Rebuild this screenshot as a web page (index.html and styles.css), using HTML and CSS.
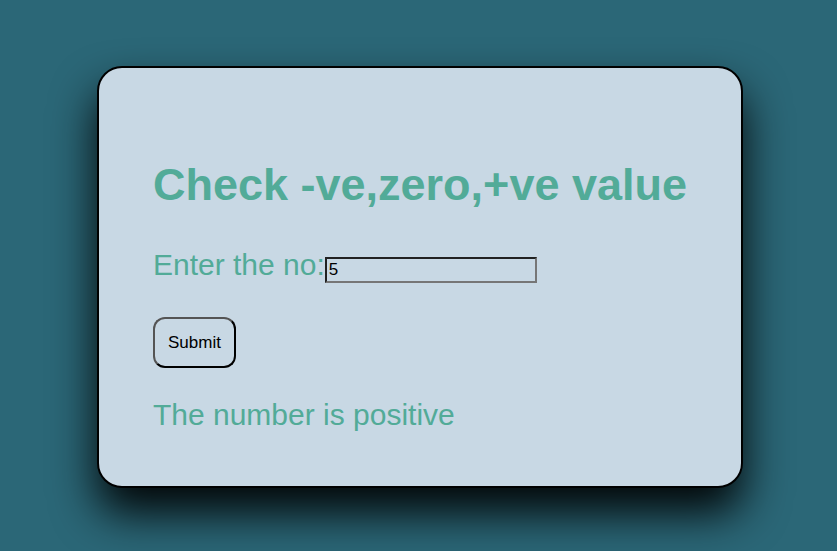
FILE: index.html
```html
<!DOCTYPE html>
<html lang="en">
<head>
<meta charset="utf-8">
<title>Check value</title>
<link rel="stylesheet" href="styles.css">
</head>
<body>
<main class="card">
<h1 class="title">Check -ve,zero,+ve value</h1>
<form class="form">
<div class="field"><label for="number">Enter the no:</label><input class="number" id="number" type="text" value="5"></div>
<button class="submit" type="button">Submit</button>
</form>
<p class="result">The number is positive</p>
</main>
</body>
</html>
```
FILE: styles.css
```css
body {
  box-sizing: border-box;
  min-height: 100vh;
  margin: 0;
  padding: 66px 20px 60px 23px;
  display: flex;
  justify-content: center;
  align-items: flex-start;
  background: #2b6777;
  color: #52ab98;
  font-family: "Liberation Sans", Arial, sans-serif;
  font-size: 30px;
  line-height: 34px;
}

.card {
  padding: 91px 54px 54px;
  border: 2px solid #000;
  border-radius: 25px;
  background: #c8d8e4;
  box-shadow: 0 25px 45px rgba(0, 0, 0, 0.95);
}

.title {
  margin: 0 0 37px;
  font-size: 45px;
  line-height: 52px;
}

.field {
  display: flex;
  align-items: flex-start;
}

.number {
  box-sizing: border-box;
  width: 212px;
  height: 26px;
  margin: 9px 0 0;
  padding: 1px 2px;
  border: 2px inset #767676;
  background: transparent;
  color: #000;
  font: 17px "Liberation Sans", Arial, sans-serif;
}

.submit {
  display: block;
  margin: 34px 0 30px;
  height: 51px;
  padding: 0 13px;
  border: 2px outset #000;
  border-radius: 12px;
  background: transparent;
  color: #000;
  font: 17px "Liberation Sans", Arial, sans-serif;
}

.result {
  margin: 0;
}
```
